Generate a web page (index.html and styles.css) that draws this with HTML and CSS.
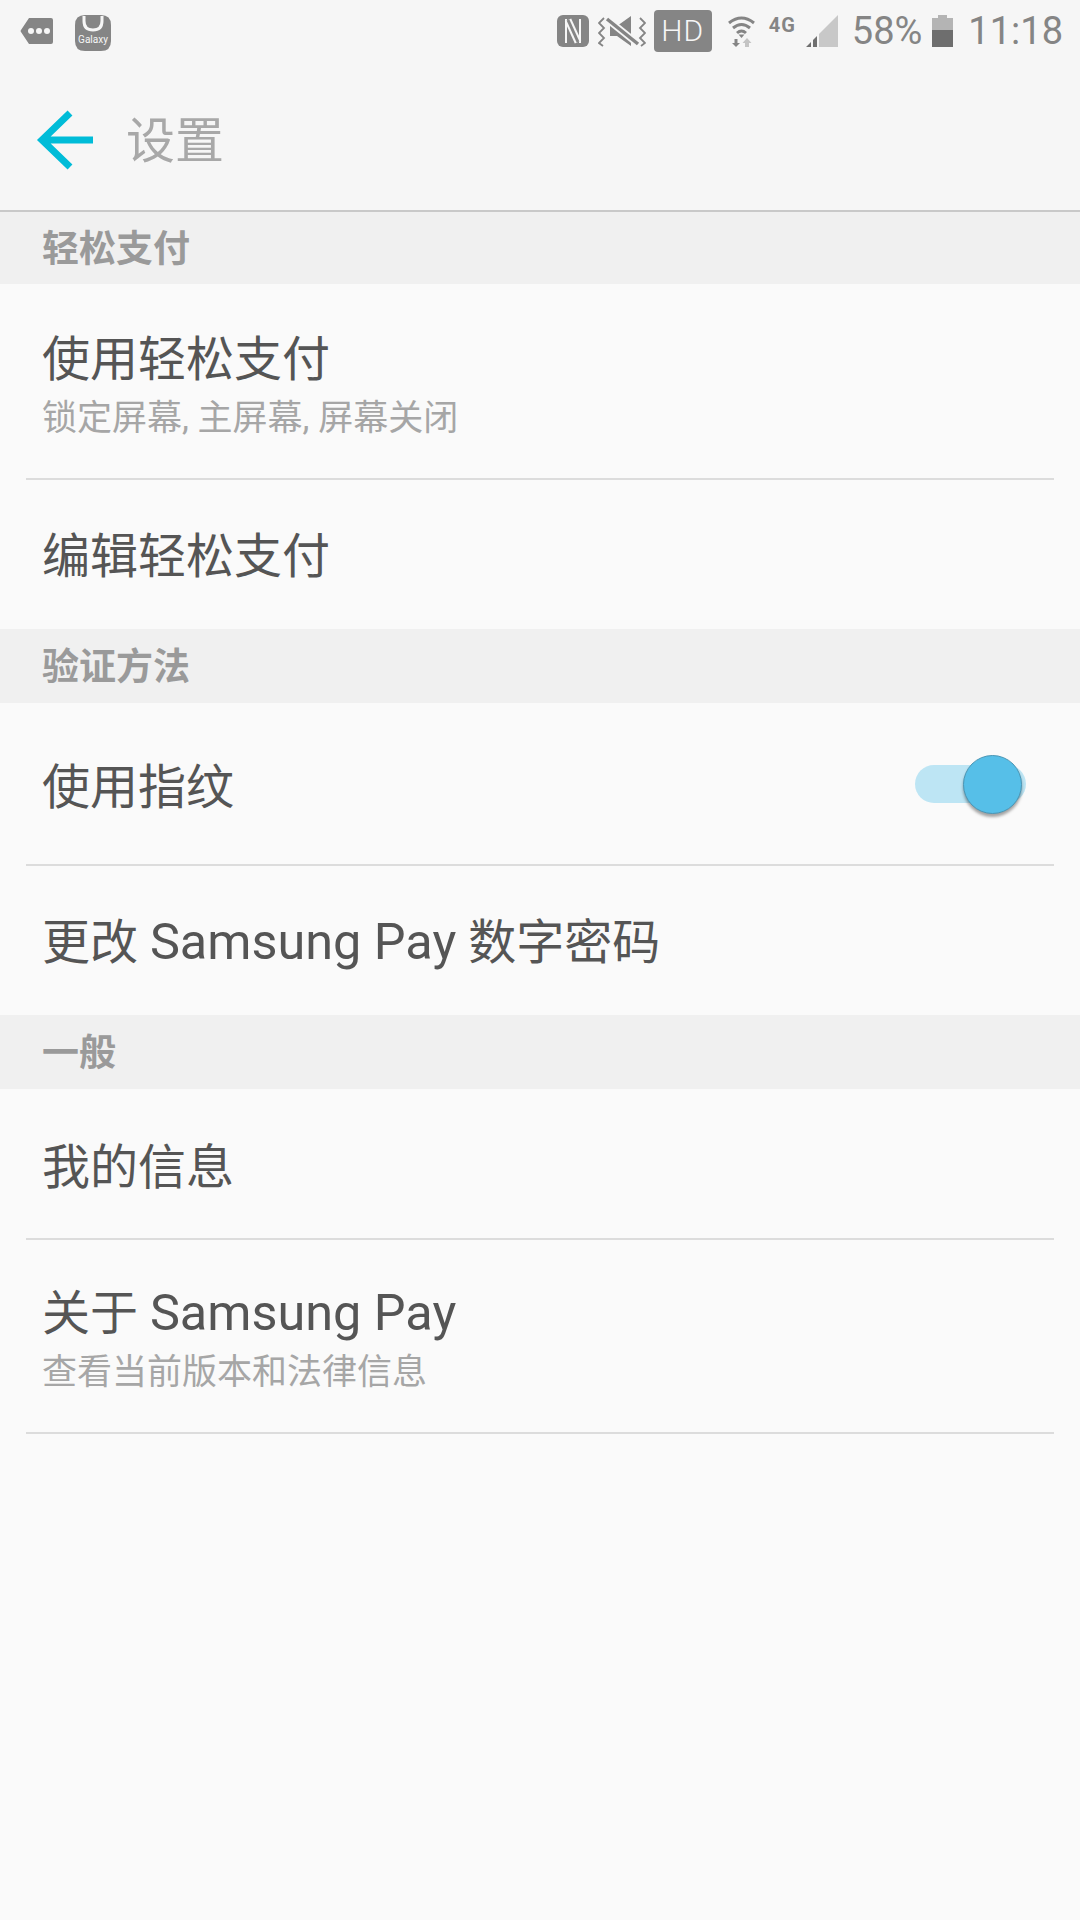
FILE: index.html
```html
<!DOCTYPE html>
<html lang="zh-CN">
<head>
    <meta charset="UTF-8">
    <title>设置</title>
    <link rel="stylesheet" href="styles.css">
</head>
<body>
    <div class="status-bar">
        <div class="status-left">
            <svg width="34" height="26" viewBox="0 0 34 26">
                <path d="M9 0H31Q33 0 33 2V24Q33 26 31 26H9L1 14Q0 13 1 12Z" fill="#858585"/>
                <circle cx="11" cy="13" r="3" fill="#f6f6f6"/>
                <circle cx="19" cy="13" r="3" fill="#f6f6f6"/>
                <circle cx="27" cy="13" r="3" fill="#f6f6f6"/>
            </svg>
            <svg class="icon-galaxy" width="36" height="36" viewBox="0 0 36 36">
                <path d="M10 0H26Q36 0 36 10V26Q36 36 26 36H10Q0 36 0 26V10Q0 0 10 0Z" fill="#858585"/>
                <path d="M9 1V6Q9 15 18 15Q27 15 27 6V1" fill="none" stroke="#f6f6f6" stroke-width="3"/>
                <text x="18" y="28" text-anchor="middle" class="galaxy-text">Galaxy</text>
            </svg>
        </div>
        <div class="status-right">
            <svg class="icon-nfc" width="32" height="32" viewBox="0 0 32 32">
                <rect width="32" height="32" rx="6" fill="#858585"/>
                <path d="M9 4V28M23 4V28" stroke="#f6f6f6" stroke-width="2"/>
                <path d="M11 5L21 27" stroke="#f6f6f6" stroke-width="7"/>
                <path d="M11 5L21 27" stroke="#858585" stroke-width="3"/>
            </svg>
            <svg class="icon-mute" width="48" height="32" viewBox="0 0 48 32">
                <path d="M6 3L1 8L6 13L1 18L6 23L1 28L5 31M42 3L47 8L42 13L47 18L42 23L47 28L43 31" fill="none" stroke="#858585" stroke-width="1.800"/>
                <path d="M12 11H19L33 1V31L19 21H12Z" fill="#858585"/>
                <path d="M9 4L40 29" stroke="#f6f6f6" stroke-width="7"/>
                <path d="M9 4L40 29" stroke="#858585" stroke-width="3.500"/>
            </svg>
            <div class="hd-badge">HD</div>
            <svg class="icon-wifi" width="27" height="32" viewBox="0 0 27 32">
                <path d="M1 8Q13.500 -2 26 8M5 13Q13.500 6 22 13M9 18Q13.500 14 18 18" fill="none" stroke="#858585" stroke-width="3"/>
                <path d="M10.500 19.500L13.500 23L16.500 19.500Z" fill="#858585"/>
                <path d="M6.500 24V28H4L8 32L12 28H9.500V24Z" fill="#858585"/>
                <path d="M17 32V28H14.500L19 23L23.500 28H21V32Z" fill="#c4c4c4"/>
            </svg>
            <div class="net-type">4G</div>
            <svg class="icon-signal" width="32" height="32" viewBox="0 0 32 32">
                <path d="M32 0V32H13V19Z" fill="#c8c8c8"/>
                <path d="M0 32L5 27V32ZM7 25L11 21V32H7Z" fill="#707070"/>
            </svg>
            <div class="battery-pct">58%</div>
            <div class="battery">
                <div class="battery-cap"></div>
                <div class="battery-body"><div class="battery-level"></div></div>
            </div>
            <div class="clock">11:18</div>
        </div>
    </div>

    <div class="app-bar">
        <svg class="back-arrow" width="58" height="60" viewBox="0 0 58 60">
            <path d="M34 3L6 30L34 57M6 30H57" fill="none" stroke="#00bcd8" stroke-width="7"/>
        </svg>
        <div class="app-title">设置</div>
    </div>

    <div class="section-head section-first">轻松支付</div>
    <div class="row row-sub">
        <div class="row-title">使用轻松支付</div>
        <div class="row-desc">锁定屏幕, 主屏幕, 屏幕关闭</div>
    </div>
    <div class="row row-last">
        <div class="row-title">编辑轻松支付</div>
    </div>

    <div class="section-head">验证方法</div>
    <div class="row row-switch">
        <div class="row-title">使用指纹</div>
        <div class="switch">
            <div class="switch-knob"></div>
        </div>
    </div>
    <div class="row row-last">
        <div class="row-title">更改 <span class="latin">Samsung Pay</span> 数字密码</div>
    </div>

    <div class="section-head">一般</div>
    <div class="row row-info">
        <div class="row-title">我的信息</div>
    </div>
    <div class="row row-about">
        <div class="row-title">关于 <span class="latin">Samsung Pay</span></div>
        <div class="row-desc">查看当前版本和法律信息</div>
    </div>
</body>
</html>
```

FILE: styles.css
```css
body {
    margin: 0px;
    height: 1920px;
    overflow: hidden;
    background-color: #fafafa;
    font-family: Roboto, "Noto Sans CJK SC", sans-serif;
}

.status-bar {
    height: 62px;
    padding: 0 17px 0 20px;
    display: flex;
    justify-content: space-between;
    background-color: #f6f6f6;
}

.status-left {
    display: flex;
    align-items: center;
    gap: 21px;
}

.icon-galaxy {
    margin-top: 3px;
}

.galaxy-text {
    font-family: Roboto, sans-serif;
    font-size: 10px;
    fill: #f6f6f6;
}

.status-right {
    display: flex;
    align-items: center;
    color: #858585;
}

.icon-nfc {
    margin-right: 9px;
}

.icon-mute {
    margin-right: 8px;
}

.hd-badge {
    width: 58px;
    height: 42px;
    margin-right: 16px;
    border-radius: 4px;
    background-color: #858585;
    color: #f6f6f6;
    font-size: 30px;
    font-weight: 300;
    letter-spacing: 1px;
    line-height: 42px;
    text-align: center;
}

.icon-wifi {
    margin-right: 14px;
}

.net-type {
    width: 37px;
    margin-bottom: 12px;
    font-size: 20px;
    font-weight: bold;
    letter-spacing: 1px;
}

.icon-signal {
    margin-right: 14px;
}

.battery-pct {
    font-size: 38px;
    margin-right: 10px;
}

.battery {
    width: 21px;
    margin-right: 15px;
}

.battery-cap {
    width: 9px;
    height: 3px;
    margin: 0 auto;
    background-color: #b4b4b4;
}

.battery-body {
    height: 29px;
    background-color: #b4b4b4;
    display: flex;
    align-items: flex-end;
}

.battery-level {
    width: 100%;
    height: 17px;
    background-color: #6e6e6e;
}

.clock {
    font-size: 38px;
}

.app-bar {
    height: 148px;
    padding-left: 36px;
    display: flex;
    align-items: center;
    background-color: #f6f6f6;
    border-bottom: 2px solid #c9c9c9;
}

.back-arrow {
    margin-top: 8px;
    margin-right: 32px;
}

.app-title {
    font-size: 49px;
    color: #a8a8a8;
}

.section-head {
    height: 74px;
    padding-left: 42px;
    background-color: #f0f0f0;
    color: #9a9a9a;
    font-size: 37px;
    font-weight: bold;
    line-height: 78px;
}

.section-first {
    height: 72px;
    line-height: 76px;
}

.row {
    box-sizing: border-box;
    margin: 0 26px;
    padding: 0 16px;
    display: flex;
    flex-direction: column;
    justify-content: center;
    border-bottom: 2px solid #dcdcdc;
}

.row-sub {
    height: 196px;
    padding-top: 8px;
}

.row-last {
    height: 149px;
    padding-top: 4px;
    border-bottom: none;
}

.row-switch {
    height: 163px;
    flex-direction: row;
    justify-content: space-between;
    align-items: center;
}

.row-switch .row-title {
    margin-top: 9px;
}

.row-info {
    height: 151px;
    padding-top: 9px;
}

.row-about {
    height: 194px;
    padding-top: 6px;
}

.row-title {
    font-size: 48px;
    line-height: 62px;
    color: #555;
}

.latin {
    font-size: 50.400px;
}

.row-desc {
    margin-top: 5px;
    font-size: 35px;
    line-height: 46px;
    color: #a6a6a6;
}

.switch {
    position: relative;
    width: 111px;
    height: 38px;
    margin-right: 12px;
    border-radius: 19px;
    background-color: #bde5f4;
}

.switch-knob {
    box-sizing: border-box;
    position: absolute;
    top: -10px;
    right: 4px;
    width: 59px;
    height: 59px;
    border-radius: 50%;
    background-color: #56bfe8;
    border: 1px solid #4a96b5;
    box-shadow: 0 3px 3px rgba(0, 0, 0, 0.35);
}
```
